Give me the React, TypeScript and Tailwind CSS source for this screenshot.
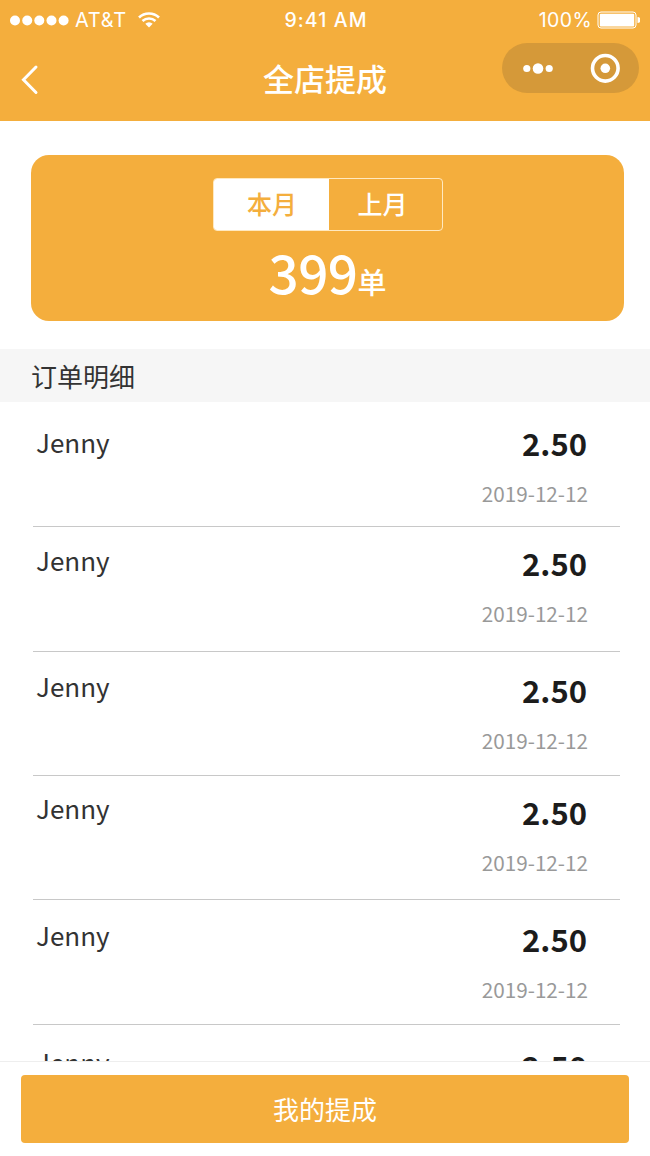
import React from 'react';

interface Order {
    name: string;
    amount: string;
    date: string;
    rowClass: string;
    amountClass: string;
}

const orders: Order[] = [
    { name: 'Jenny', amount: '2.50', date: '2019-12-12', rowClass: 'h-[125px] pt-[21px]', amountClass: 'mt-0' },
    { name: 'Jenny', amount: '2.50', date: '2019-12-12', rowClass: 'h-[125px] pt-[14px]', amountClass: 'mt-[2px]' },
    { name: 'Jenny', amount: '2.50', date: '2019-12-12', rowClass: 'h-[124px] pt-[15px]', amountClass: 'mt-[3px]' },
    { name: 'Jenny', amount: '2.50', date: '2019-12-12', rowClass: 'h-[124px] pt-[13px]', amountClass: 'mt-[3px]' },
    { name: 'Jenny', amount: '2.50', date: '2019-12-12', rowClass: 'h-[125px] pt-[16px]', amountClass: 'mt-[3px]' },
    { name: 'Jenny', amount: '2.50', date: '2019-12-12', rowClass: 'h-[125px] pt-[18px]', amountClass: 'mt-[3px]' },
];

const StatusBar: React.FC = () => (
    <div className="h-[40px] px-[10px] grid grid-cols-3 items-center font-[Inter,sans-serif] text-[19.5px] leading-[40px]">
        <div className="flex items-center">
            <svg width="60" height="12" viewBox="0 0 60 12" fill="currentColor">
                <circle cx="5" cy="6.5" r="5" />
                <circle cx="17.2" cy="6.5" r="5" />
                <circle cx="29.3" cy="6.5" r="5" />
                <circle cx="41.5" cy="6.5" r="5" />
                <circle cx="53.6" cy="6.5" r="5" />
            </svg>
            <span className="ml-[5px] text-[20px] tracking-[0.7px]">AT&amp;T</span>
            <svg className="ml-[11px]" width="22" height="16" viewBox="0 0 22 16" fill="none" stroke="currentColor" strokeWidth="2.6">
                <path d="M1 5.5a14.5 14.5 0 0 1 20 0M4.5 9a9.5 9.5 0 0 1 13 0" />
                <path d="M11 15.5l-3.7-3.7a5.3 5.3 0 0 1 7.4 0z" fill="currentColor" stroke="none" />
            </svg>
        </div>
        <div className="pl-[2px] text-center font-medium tracking-[1.1px]">9:41 AM</div>
        <div className="flex items-center justify-end">
            <span className="tracking-[0.4px]">100%</span>
            <svg className="ml-[5px]" width="43" height="18" viewBox="0 0 43 18" fill="currentColor">
                <rect x="1" y="1" width="38" height="16" rx="3" fill="none" stroke="currentColor" strokeWidth="1" />
                <rect x="2.8" y="2.8" width="34.4" height="12.6" rx="1" />
                <path d="M40.5 6a3 3 0 0 1 0 6z" />
            </svg>
        </div>
    </div>
);

const Header: React.FC = () => (
    <header className="h-[121px] shrink-0 bg-[#f4ae3d] text-white">
        <StatusBar />
        <div className="grid h-[77px] grid-cols-3 items-center">
            <button className="ml-[19px] w-[20px]" aria-label="返回">
                <svg width="20" height="32" viewBox="0 0 20 32" fill="none" stroke="currentColor" strokeWidth="3">
                    <path d="M17 4L4.5 16.8 17 29.5" strokeLinecap="round" />
                </svg>
            </button>
            <h1 className="text-center text-[31px] font-medium">全店提成</h1>
            <div className="mb-[21px] mr-[11px] h-[50px] w-[137px] justify-self-end rounded-full bg-[#d59939]">
                <svg width="137" height="50" viewBox="0 0 137 50" fill="currentColor">
                    <circle cx="24.8" cy="25.5" r="3.6" />
                    <circle cx="36" cy="25.5" r="5.3" />
                    <circle cx="47.2" cy="25.5" r="3.6" />
                    <circle cx="103.3" cy="25.3" r="12.8" fill="none" stroke="currentColor" strokeWidth="3.6" />
                    <circle cx="103.3" cy="25.3" r="4.8" />
                </svg>
            </div>
        </div>
    </header>
);

const Summary: React.FC = () => (
    <section className="ml-[31px] mr-[26px] mt-[34px] h-[166px] shrink-0 rounded-[18px] bg-[#f4ae3d] pt-[23px] text-white">
        <div className="mx-auto flex h-[53px] w-[230px] overflow-hidden rounded-[4px] border border-[#ffe9c0] text-[25px] leading-[49px]">
            <button className="w-[115px] bg-white pb-[2px] pl-[2px] font-medium text-[#f4ae3d]">本月</button>
            <button className="flex-1 pb-[2px] pr-[5px] font-medium">上月</button>
        </div>
        <div className="flex items-baseline justify-center leading-[80px]">
            <span className="text-[53px] font-medium tracking-[-0.6px]">399</span>
            <span className="text-[29px] font-medium">单</span>
        </div>
    </section>
);

const OrderRow: React.FC<{ order: Order }> = ({ order }) => (
    <li className={`flex justify-between border-b border-[#c8c8c8] pl-[3px] pr-[32px] ${order.rowClass}`}>
        <span className="text-[26px] leading-[38px] text-[#333333]">{order.name}</span>
        <div className={`text-right ${order.amountClass}`}>
            <div className="pr-px text-[31px] font-bold leading-[40px] text-[#1c1c1c]">{order.amount}</div>
            <div className="mt-[15px] text-[20.7px] leading-[30px] text-[#999999]">{order.date}</div>
        </div>
    </li>
);

const App: React.FC = () => {
    return (
        <div className="flex h-[1156px] w-[650px] flex-col overflow-hidden bg-white font-['Noto_Sans_CJK_SC','Noto_Sans',sans-serif]">
            <Header />
            <Summary />
            <h2 className="mt-[28px] h-[53px] shrink-0 bg-[#f6f6f6] pl-[31px] text-[26px] leading-[53px] text-[#333333]">订单明细</h2>
            <ul className="ml-[33px] mr-[30px] min-h-0 flex-1 overflow-hidden">
                {orders.map((order, index) => (
                    <OrderRow key={index} order={order} />
                ))}
            </ul>
            <footer className="h-[95px] shrink-0 border-t border-[#eeeeee] px-[21px] pt-[13px]">
                <button className="h-[68px] w-full rounded-[4px] bg-[#f4ae3d] pb-[2px] text-[26px] text-white">我的提成</button>
            </footer>
        </div>
    );
};

export default App;
